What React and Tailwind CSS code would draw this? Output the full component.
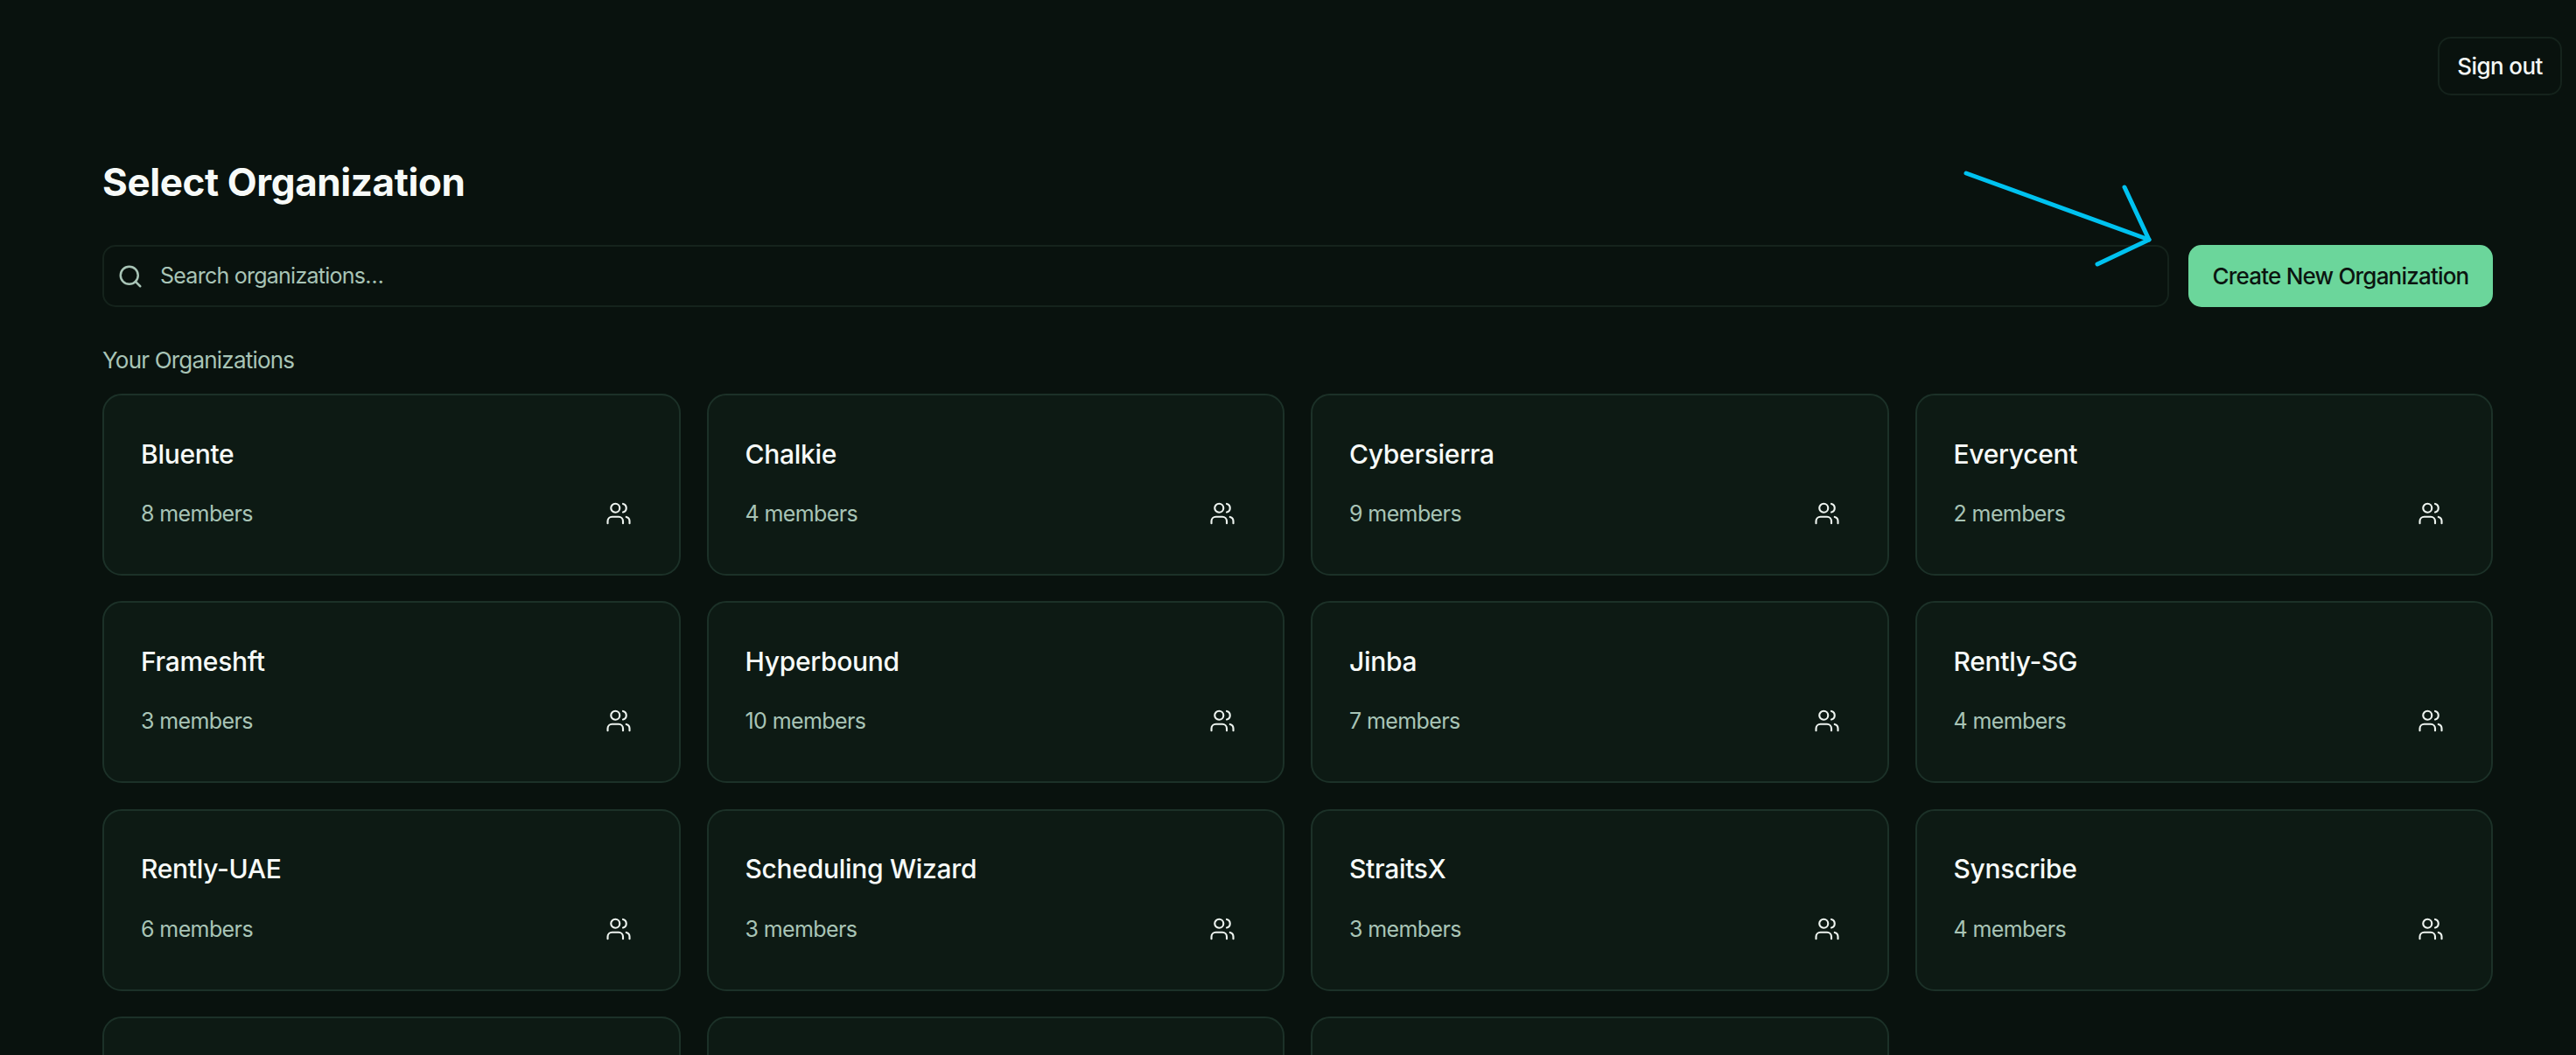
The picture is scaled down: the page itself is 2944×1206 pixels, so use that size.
import React from "react";
import { Search, Users } from "lucide-react";

const orgs = [
  ["Bluente", 8], ["Chalkie", 4], ["Cybersierra", 9], ["Everycent", 2],
  ["Frameshft", 3], ["Hyperbound", 10], ["Jinba", 7], ["Rently-SG", 4],
  ["Rently-UAE", 6], ["Scheduling Wizard", 3], ["StraitsX", 3], ["Synscribe", 4],
  ["", 0], ["", 0], ["", 0],
];

function Card({ name, count }) {
  return (
    <div className="h-[208px] rounded-[22px] border-2 border-[#1c3128] bg-[#0d1a14] pl-[42px] pr-[54px] pt-[46.5px]">
      {name && (
        <>
          <div className="text-[30px] leading-[40px] font-medium text-[#f7faf8] tracking-[-0.3px]">{name}</div>
          <div className="mt-[28.5px] flex items-center justify-between">
            <span className="text-[25px] leading-[40px] text-[#a8c4b6] tracking-[-0.6px]">{count} members</span>
            <Users size={30} strokeWidth={1.7} className="text-[#eef4f0]" />
          </div>
        </>
      )}
    </div>
  );
}

export default function App() {
  return (
    <div className="relative h-screen overflow-hidden bg-[#09120e] font-['Inter',sans-serif]">
      <div className="flex justify-end pt-[42px] pr-[16px]">
        <button className="h-[67px] w-[142px] rounded-[15px] border-2 border-[#15231c] text-[26px] font-medium text-[#f4f8f6] tracking-[-0.6px]">
          Sign out
        </button>
      </div>
      <div className="pl-[117px] pr-[95px]">
        <h1 className="mt-[69px] text-[44px] leading-[60px] font-bold text-[#f7faf8] tracking-[-0.4px]">
          Select Organization
        </h1>
        <div className="mt-[42px] flex gap-[22px]">
          <div className="flex h-[71px] flex-1 items-center gap-[19px] rounded-[15px] border-2 border-[#15231c] pl-[15px]">
            <Search size={30} strokeWidth={2} className="text-[#a8c4b6]" />
            <input
              placeholder="Search organizations…"
              className="flex-1 bg-transparent text-[25px] tracking-[-0.75px] text-white outline-none placeholder:text-[#a8c4b6]"
            />
          </div>
          <button className="h-[71px] w-[348px] rounded-[15px] bg-[#6bd69b] text-[26px] font-medium text-[#0b1510] tracking-[-0.8px]">
            Create New Organization
          </button>
        </div>
        <div className="mt-[41px] text-[26px] leading-[40px] text-[#a8c4b6] tracking-[-0.8px]">Your Organizations</div>
        <div className="mt-[18px] grid grid-cols-4 gap-x-[30px] gap-y-[29.4px]">
          {orgs.map(([n, c], i) => (
            <Card key={i} name={n} count={c} />
          ))}
        </div>
      </div>
      <svg className="absolute left-[2230px] top-[190px]" width="240" height="125" viewBox="2230 190 240 125" fill="none" stroke="#00c2f0" strokeWidth="5" strokeLinecap="round" strokeLinejoin="round">
        <path d="M2247 198L2456 274" />
        <path d="M2428 214L2456 274L2397 302" />
      </svg>
    </div>
  );
}
